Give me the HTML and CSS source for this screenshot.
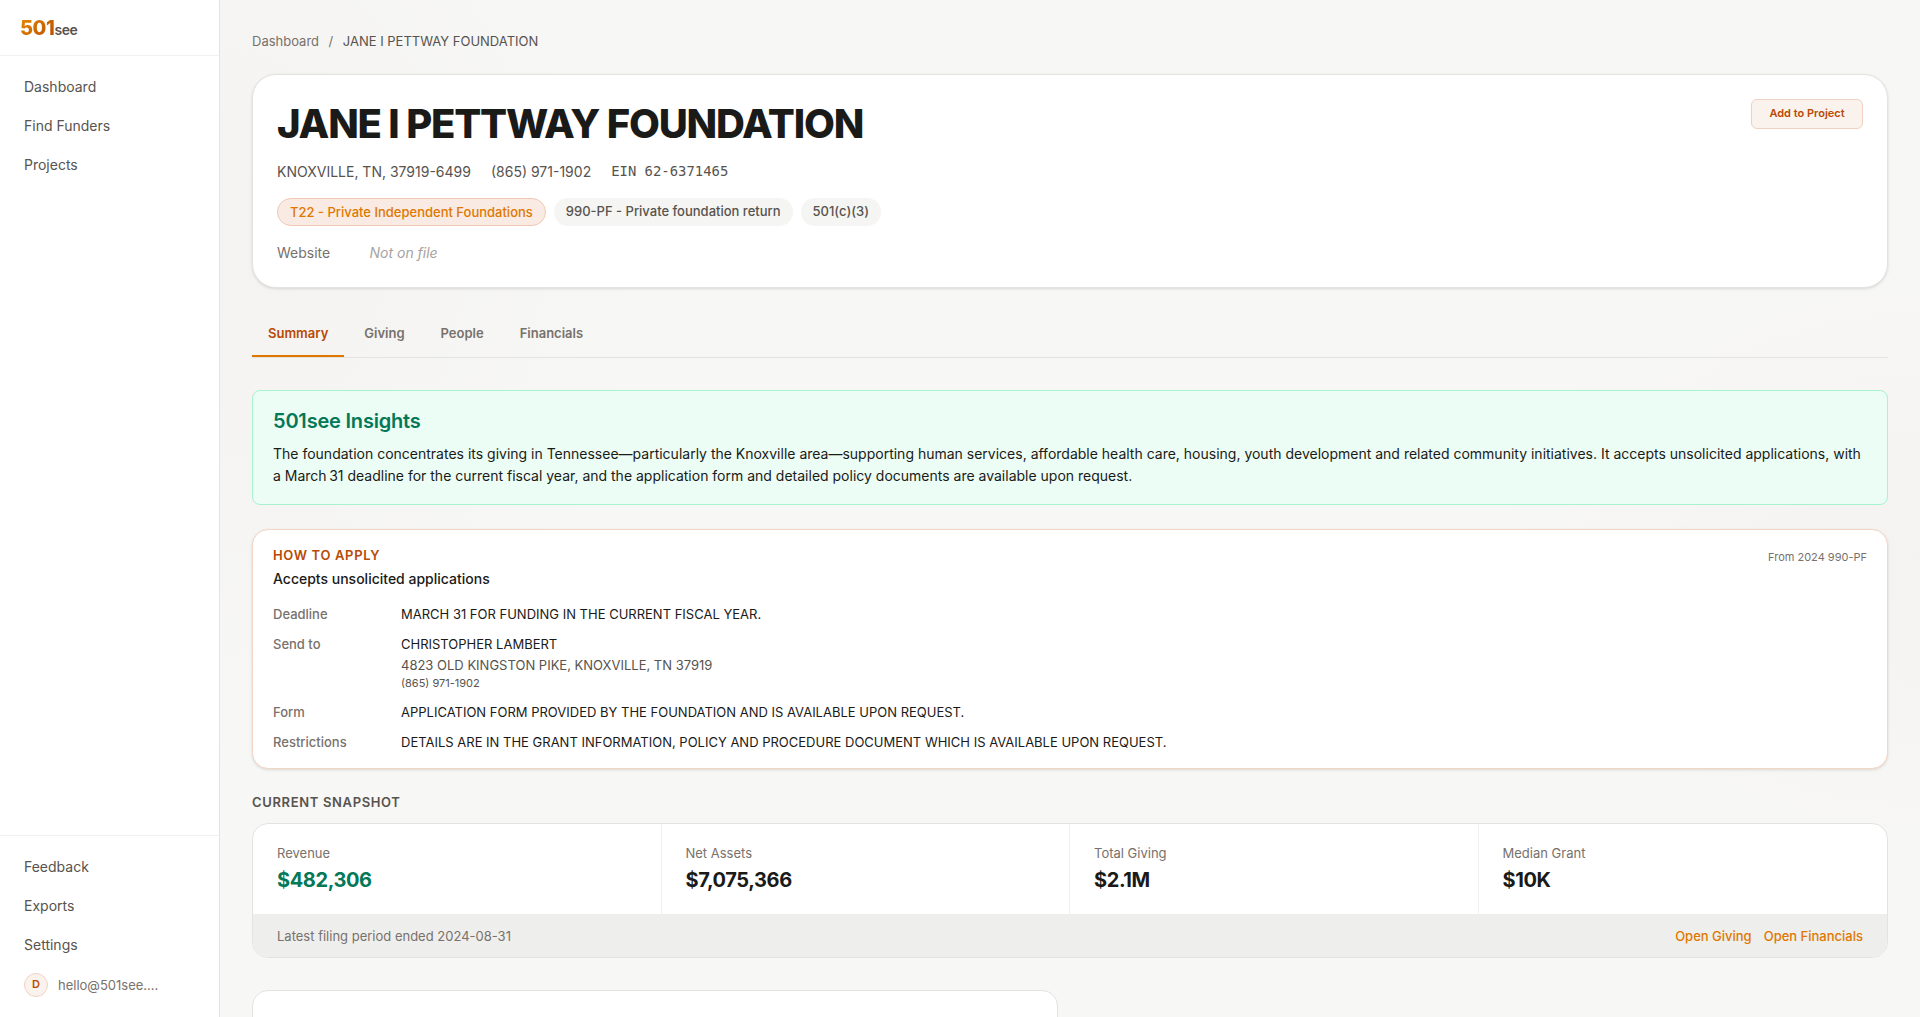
FILE: index.html
```html
<!DOCTYPE html>
<html lang="en">
<head>
<meta charset="utf-8">
<title>JANE I PETTWAY FOUNDATION - 501see</title>
<link rel="stylesheet" href="styles.css">
</head>
<body>
<div class="app">
  <aside class="sidebar">
    <div class="brand"><span class="brand-num">501</span><span class="brand-see">see</span></div>
    <nav class="nav">
      <a>Dashboard</a>
      <a>Find Funders</a>
      <a>Projects</a>
    </nav>
    <div class="nav nav-bottom">
      <a>Feedback</a>
      <a>Exports</a>
      <a>Settings</a>
      <div class="user"><span class="avatar">D</span><span class="email">hello@501see....</span></div>
    </div>
  </aside>
  <main class="main">
    <div class="crumbs"><a>Dashboard</a><span>/</span><span class="current">JANE I PETTWAY FOUNDATION</span></div>

    <section class="card hero">
      <div class="hero-top">
        <h1>JANE I PETTWAY FOUNDATION</h1>
        <button class="add">Add to Project</button>
      </div>
      <div class="meta"><span>KNOXVILLE, TN, 37919-6499</span><span>(865) 971-1902</span><span class="ein">EIN 62-6371465</span></div>
      <div class="tags">
        <span class="tag tag-accent">T22 - Private Independent Foundations</span>
        <span class="tag">990-PF - Private foundation return</span>
        <span class="tag">501(c)(3)</span>
      </div>
      <div class="website"><span class="label">Website</span><span class="missing">Not on file</span></div>
    </section>

    <div class="tabs">
      <a class="tab active">Summary</a>
      <a class="tab">Giving</a>
      <a class="tab">People</a>
      <a class="tab">Financials</a>
    </div>

    <section class="insights">
      <h2>501see Insights</h2>
      <p>The foundation concentrates its giving in Tennessee—particularly the Knoxville area—supporting human services, affordable health care, housing, youth development and related community initiatives. It accepts unsolicited applications, with a March&#8239;31 deadline for the current fiscal year, and the application form and detailed policy documents are available upon request.</p>
    </section>

    <section class="apply">
      <div class="apply-head">
        <h3>HOW TO APPLY</h3>
        <span class="source">From 2024 990-PF</span>
      </div>
      <div class="accepts">Accepts unsolicited applications</div>
      <dl class="details">
        <dt>Deadline</dt>
        <dd>MARCH 31 FOR FUNDING IN THE CURRENT FISCAL YEAR.</dd>
        <dt>Send to</dt>
        <dd>CHRISTOPHER LAMBERT
          <div class="address">4823 OLD KINGSTON PIKE, KNOXVILLE, TN 37919</div>
          <div class="phone">(865) 971-1902</div>
        </dd>
        <dt>Form</dt>
        <dd>APPLICATION FORM PROVIDED BY THE FOUNDATION AND IS AVAILABLE UPON REQUEST.</dd>
        <dt>Restrictions</dt>
        <dd>DETAILS ARE IN THE GRANT INFORMATION, POLICY AND PROCEDURE DOCUMENT WHICH IS AVAILABLE UPON REQUEST.</dd>
      </dl>
    </section>

    <h3 class="section-title">CURRENT SNAPSHOT</h3>
    <section class="snapshot">
      <div class="stats">
        <div class="stat"><span class="name">Revenue</span><span class="value positive">$482,306</span></div>
        <div class="stat"><span class="name">Net Assets</span><span class="value">$7,075,366</span></div>
        <div class="stat"><span class="name">Total Giving</span><span class="value">$2.1M</span></div>
        <div class="stat"><span class="name">Median Grant</span><span class="value">$10K</span></div>
      </div>
      <div class="snapshot-foot">
        <span>Latest filing period ended 2024-08-31</span>
        <div class="links"><a>Open Giving</a><a>Open Financials</a></div>
      </div>
    </section>

    <section class="next-card"></section>
  </main>
</div>
</body>
</html>
```
FILE: styles.css
```css
* { box-sizing: border-box; }
body {
  margin: 0;
  font-family: Inter, "Liberation Sans", sans-serif;
  font-size: 14px;
  color: #1a1a18;
  background: #f7f7f5;
}
h1, h2, h3, p, dl, dd { margin: 0; }
.app { display: flex; height: 1017px; overflow: hidden; }

.sidebar {
  width: 220px;
  flex: none;
  display: flex;
  flex-direction: column;
  background: #fff;
  border-right: 1px solid #e3e3e2;
}
.brand {
  height: 56px;
  padding: 16px 20px 0;
  line-height: 24px;
  border-bottom: 1px solid #f1f1f0;
  letter-spacing: -0.03em;
}
.brand-num {
  font-size: 20px;
  font-weight: 800;
  color: transparent;
  background: linear-gradient(135deg, #e88a00, #b84a05);
  background-clip: text;
}
.brand-see { font-size: 14px; font-weight: 600; color: #57534e; letter-spacing: -0.03em; }
.nav { display: flex; flex-direction: column; gap: 2px; padding: 12px; }
.nav a { height: 37px; line-height: 37px; padding: 0 12px; color: #57534e; }
.nav-bottom { margin-top: auto; border-top: 1px solid #f1f1f0; height: 182px; padding-bottom: 0; }
.user { display: flex; align-items: center; gap: 10px; height: 39px; padding: 0 12px; }
.avatar {
  width: 24px;
  height: 24px;
  border: 1px solid #f0d3c5;
  border-radius: 50%;
  background: #faf2ed;
  color: #b84a05;
  font-size: 11px;
  font-weight: 600;
  line-height: 21px;
  text-align: center;
}
.email { font-size: 13px; color: #78716c; }

.main {
  flex: 1;
  padding: 32px 32px 0;
  background:
    radial-gradient(ellipse 420px 520px at 0 25%, #f4f3f1, rgba(244, 243, 241, 0)),
    radial-gradient(ellipse 420px 320px at 100% 55%, #f5f3f1, rgba(245, 243, 241, 0)),
    #f7f7f5;
}
.crumbs { display: flex; gap: 9.5px; height: 42px; font-size: 13px; line-height: 19px; color: #78716c; }
.current { color: #57534e; }

.hero {
  height: 214px;
  padding: 24px;
  background: #fff;
  border: 1px solid #e3e3e2;
  border-radius: 24px;
  box-shadow: 0 1px 3px rgba(0, 0, 0, .12);
}
.hero-top { display: flex; justify-content: space-between; align-items: flex-start; height: 62px; }
h1 { margin-top: 1px; font-size: 40px; line-height: 48px; font-weight: 800; letter-spacing: -0.03em; }
.add {
  width: 112px;
  height: 30px;
  padding: 0 0 2px;
  border: 1px solid #f0d0c2;
  border-radius: 6px;
  background: #faf2ed;
  color: #b84a05;
  font: 600 11px Inter, sans-serif;
}
.meta { display: flex; gap: 20px; height: 37px; line-height: 22px; color: #57534e; }
.ein { font-family: "DejaVu Sans Mono", monospace; font-size: 13.9px; line-height: 21px; }
.tags { display: flex; gap: 8px; height: 28px; }
.tag { padding: 0 12px; border-radius: 14px; background: #f5f5f4; color: #57534e; font-size: 13px; font-weight: 500; line-height: 26px; }
.tag-accent { border: 1px solid #efc9b5; background: #f9ebe4; color: #e07800; }
.website { display: flex; margin-top: 16px; line-height: 21px; color: #78716c; }
.website .label { width: 92.5px; }
.missing { font-style: italic; color: #a8a29e; }

.tabs { display: flex; gap: 4px; height: 45px; margin-top: 25px; border-bottom: 1px solid #e3e3e2; }
.tab { height: 44px; padding: 0 16px; font-size: 13px; font-weight: 600; line-height: 40px; color: #78716c; }
.tab.active { color: #b84a05; border-bottom: 2px solid #e07800; }

.insights {
  height: 115px;
  margin-top: 32px;
  padding: 17px 20px;
  background: #ecfdf5;
  border: 1px solid #a7f3d0;
  border-radius: 8px;
}
.insights h2 { font-size: 20px; font-weight: 600; line-height: 26px; letter-spacing: -0.01em; color: #047857; }
.insights p { margin-top: 9px; line-height: 22.4px; }

.apply {
  height: 240px;
  margin-top: 24px;
  padding: 15px 20px;
  background: #fff;
  border: 1px solid #f2d5c3;
  border-radius: 16px;
  box-shadow: 0 1px 3px rgba(0, 0, 0, .12);
}
.apply-head { display: flex; justify-content: space-between; }
.apply h3 { font-size: 13px; font-weight: 600; line-height: 20px; letter-spacing: .05em; color: #b84a05; }
.source { font-size: 11px; line-height: 24px; color: #78716c; }
.accepts { font-weight: 500; line-height: 20px; }
.details { display: grid; grid-template-columns: 128px 1fr; row-gap: 10px; margin-top: 15px; font-size: 13px; line-height: 20px; }
.details dt { color: #78716c; font-weight: 500; }
.address { margin-top: 1px; color: #57534e; }
.phone { font-size: 11px; line-height: 17px; color: #57534e; }

.section-title { margin-top: 24px; height: 30px; font-size: 13px; font-weight: 600; line-height: 19px; letter-spacing: .05em; color: #57534e; }
.snapshot { height: 135px; border: 1px solid #e3e3e2; border-radius: 16px; background: #fff; overflow: hidden; }
.stats { display: grid; grid-template-columns: repeat(4, 1fr); height: 90px; }
.stat { display: flex; flex-direction: column; padding: 19px 24px; border-right: 1px solid #f1f1f0; }
.stat:last-child { border-right: 0; }
.name { font-size: 13px; line-height: 20px; color: #78716c; }
.value { margin-top: 4px; font-size: 20px; font-weight: 700; line-height: 26px; letter-spacing: -0.02em; }
.positive { color: #047857; }
.snapshot-foot {
  display: flex;
  justify-content: space-between;
  height: 43px;
  padding: 0 24px;
  background: #eeeeec;
  font-size: 13px;
  line-height: 45px;
  color: #78716c;
}
.links { display: flex; gap: 12px; color: #e07800; font-weight: 500; }
.next-card { width: 806px; height: 60px; margin-top: 32px; border: 1px solid #e3e3e2; border-radius: 16px; background: #fff; }
```
